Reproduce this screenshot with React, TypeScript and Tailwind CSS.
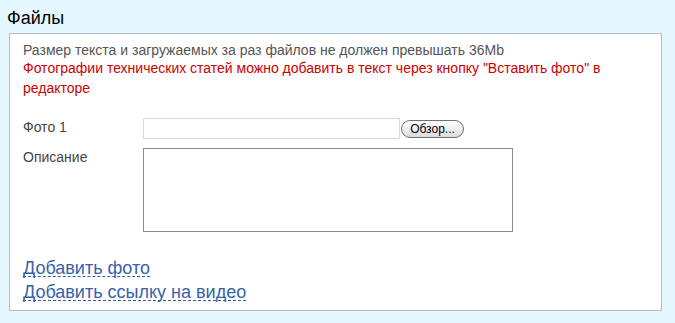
import * as React from "react"

export default function App() {
  return (
    <div className="min-h-screen bg-[#e6f8ff] pt-[7px] font-['Liberation_Sans',Arial,sans-serif]">
      <h2 className="ml-[7px] text-[18px] leading-[22px] text-black">Файлы</h2>

      <div className="mt-[4px] ml-[9px] h-[278px] w-[653px] border border-[#b4bccc] bg-white px-[13px] pt-[8px]">
        <p className="text-[14px] leading-[16px] text-[#555555]">
          Размер текста и загружаемых за раз файлов не должен превышать 36Mb
        </p>
        <p className="text-[14px] leading-[20px] text-[#cc0000]">
          Фотографии технических статей можно добавить в текст через кнопку "Вставить фото" в
          редакторе
        </p>

        <div className="mt-[20px] grid grid-cols-[120px_1fr] gap-y-[9px] text-[14px] leading-[18px] text-[#444444]">
          <span>Фото 1</span>
          <div className="flex items-center">
            <div className="h-[21px] w-[257px] border border-[#d9d9d9] bg-white" />
            <button
              type="button"
              className="ml-[1px] h-[18px] w-[63px] rounded-full border border-[#707070] bg-gradient-to-b from-white to-[#dcdcdc] text-[12px] leading-[16px] text-black"
            >
              Обзор...
            </button>
          </div>

          <span>Описание</span>
          <textarea className="h-[84px] w-[370px] resize-none border border-[#8c8c8c] bg-white outline-none" />
        </div>

        <div className="mt-[28px] flex flex-col items-start gap-[7px] text-[18px] text-[#3762a9]">
          <a className="inline-block cursor-pointer border-b border-dashed border-[#3762a9] leading-[16px]">
            Добавить фото
          </a>
          <a className="inline-block cursor-pointer border-b border-dashed border-[#3762a9] leading-[16px]">
            Добавить ссылку на видео
          </a>
        </div>
      </div>
    </div>
  )
}
